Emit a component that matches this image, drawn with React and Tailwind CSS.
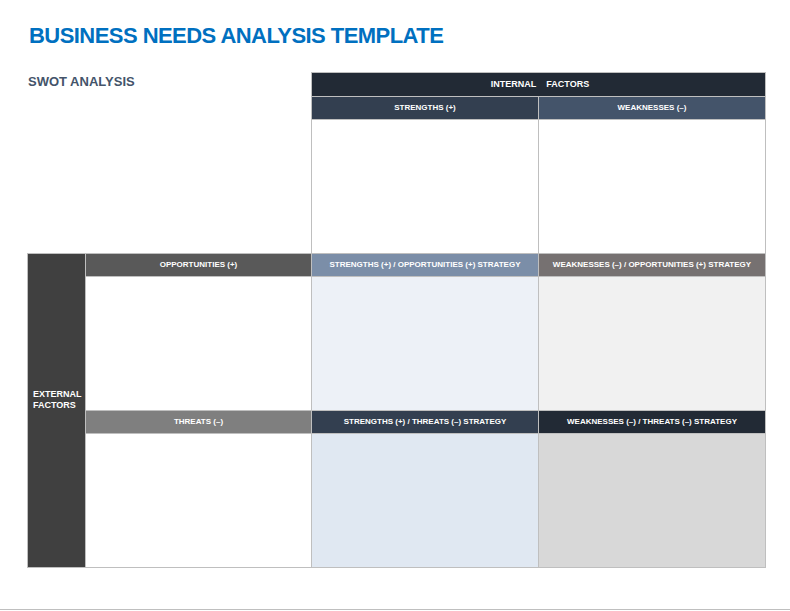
import React from 'react';

const font = { fontFamily: '"Liberation Sans", Arial, sans-serif' };

const Head = ({ bg, children }) => (
  <div className={`${bg} h-[22px] flex items-center justify-center text-white font-bold text-[8px] uppercase whitespace-nowrap`}>
    {children}
  </div>
);

const Body = ({ bg }) => <div className={`${bg} h-[133px]`} />;

export default function App() {
  return (
    <div className="w-[790px] h-[611px] bg-white relative overflow-hidden" style={font}>
      <div className="pl-[27px] pt-[23px]">
        <h1 className="text-[22px] leading-[26px] font-bold text-[#0070c0] tracking-[-0.55px] pl-[2px]">
          BUSINESS NEEDS ANALYSIS TEMPLATE
        </h1>

        {/* internal factors */}
        <div className="flex mt-[23px]">
          <div className="w-[284px] pl-px">
            <div className="text-[13px] font-bold text-[#44546a] leading-none mt-[3px]">SWOT ANALYSIS</div>
          </div>
          <div className="w-[455px] border-x border-t border-[#bfbfbf] bg-[#bfbfbf] grid grid-cols-[226px_226px] gap-px">
            <div className="col-span-2 bg-[#222a35] h-[23px] flex items-center justify-center text-white font-bold text-[9px] pl-[3px]">
              INTERNAL&nbsp;&nbsp;&nbsp;&nbsp;FACTORS
            </div>
            <Head bg="bg-[#333f50]">STRENGTHS (+)</Head>
            <Head bg="bg-[#44546a]">WEAKNESSES (–)</Head>
            <Body bg="bg-white" />
            <Body bg="bg-white" />
          </div>
        </div>

        {/* external factors */}
        <div className="w-[739px] bg-[#bfbfbf] p-px grid grid-cols-[57px_225px_226px_226px] gap-px">
          <div className="row-span-4 bg-[#404040] flex items-center pl-[5px] pb-[22px] text-white font-bold text-[9px] leading-[11px]">
            EXTERNAL<br />FACTORS
          </div>
          <Head bg="bg-[#595959]">OPPORTUNITIES (+)</Head>
          <Head bg="bg-[#7b8ea8]">STRENGTHS (+) / OPPORTUNITIES (+) STRATEGY</Head>
          <Head bg="bg-[#767171]">WEAKNESSES (–) / OPPORTUNITIES (+) STRATEGY</Head>
          <Body bg="bg-white" />
          <Body bg="bg-[#edf1f7]" />
          <Body bg="bg-[#f1f1f1]" />
          <Head bg="bg-[#7f7f7f]">THREATS (–)</Head>
          <Head bg="bg-[#333f50]">STRENGTHS (+) / THREATS (–) STRATEGY</Head>
          <Head bg="bg-[#222a35]">WEAKNESSES (–) / THREATS (–) STRATEGY</Head>
          <Body bg="bg-white" />
          <Body bg="bg-[#e0e8f2]" />
          <Body bg="bg-[#d8d8d8]" />
        </div>
      </div>
      <div className="absolute left-0 right-0 bottom-[1px] h-px bg-[#bfbfbf]" />
    </div>
  );
}
